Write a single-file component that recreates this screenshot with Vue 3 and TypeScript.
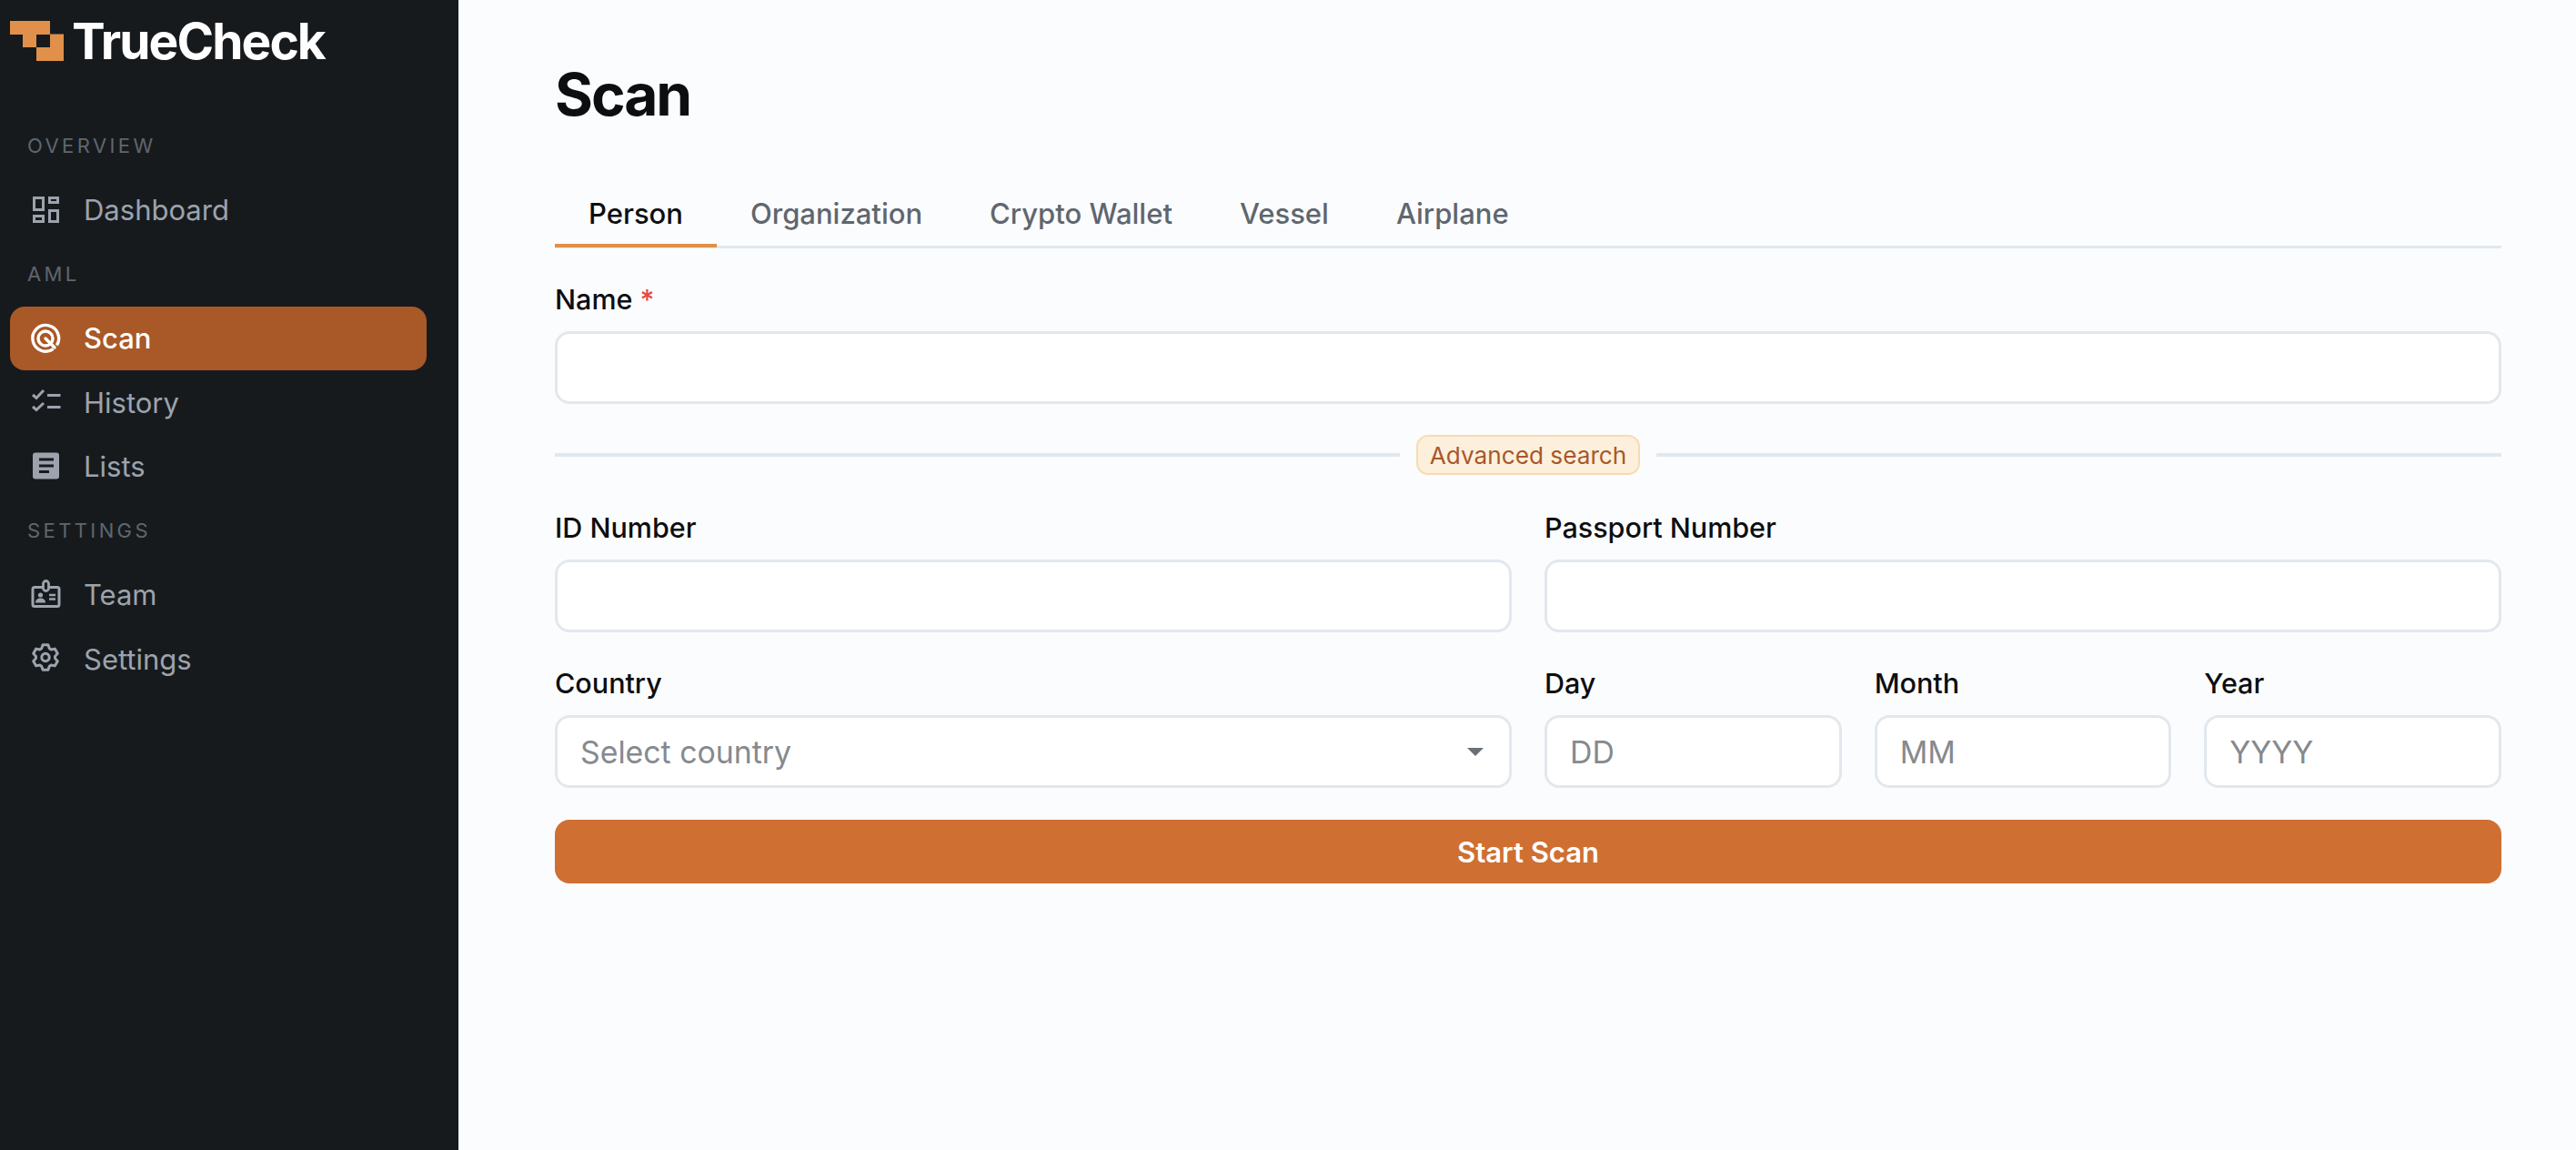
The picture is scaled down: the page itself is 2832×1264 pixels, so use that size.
<template>
  <div class="app">
    <aside class="sidebar">
      <div class="brand">
        <svg class="brand-mark" viewBox="0 0 60 44" width="60" height="44">
          <path d="M0 0H44V15H29V29H14V15H0Z" fill="#e0904a" />
          <path d="M44 14.500H59V44H29V29H44Z" fill="#e0904a" />
        </svg>
        <span class="brand-name">TrueCheck</span>
      </div>
      <nav class="nav">
        <template v-for="row in rows" :key="row.label">
          <div v-if="row.heading" class="nav-heading">{{ row.label }}</div>
          <a v-else class="nav-item" :class="{ active: row.active }">
            <svg class="nav-icon" viewBox="0 0 32 32" fill="none" stroke="currentColor" stroke-width="3" v-html="row.icon"></svg>
            <span>{{ row.label }}</span>
          </a>
        </template>
      </nav>
    </aside>

    <main class="main">
      <h1 class="title">Scan</h1>
      <div class="tabs">
        <button v-for="tab in tabs" :key="tab" class="tab" :class="{ active: tab === 'Person' }">{{ tab }}</button>
      </div>

      <div class="field name-field">
        <label>Name <span class="req">*</span></label>
        <div class="input"></div>
      </div>

      <div class="divider">
        <span class="divider-line"></span>
        <span class="badge">Advanced search</span>
        <span class="divider-line"></span>
      </div>

      <div class="two-col id-row">
        <div class="field">
          <label>ID Number</label>
          <div class="input"></div>
        </div>
        <div class="field">
          <label>Passport Number</label>
          <div class="input"></div>
        </div>
      </div>

      <div class="two-col country-row">
        <div class="field">
          <label>Country</label>
          <div class="input select">
            <span class="placeholder">Select country</span>
            <span class="caret"></span>
          </div>
        </div>
        <div class="date-row">
          <div v-for="d in dateFields" :key="d.label" class="field">
            <label>{{ d.label }}</label>
            <div class="input"><span class="placeholder">{{ d.hint }}</span></div>
          </div>
        </div>
      </div>

      <button class="start">Start Scan</button>
    </main>
  </div>
</template>

<script setup lang="ts">
interface Row {
  label: string
  heading?: boolean
  active?: boolean
  icon?: string
}

// six toothed gear, top tooth pointing straight up
function gearPoints(cx: number, cy: number): string {
  const pts: string[] = []
  for (let k = 0; k < 6; k++) {
    const a = -90 + 60 * k
    for (const [off, r] of [[-24, 10.6], [-12, 14], [12, 14], [24, 10.6]]) {
      const rad = ((a + off) * Math.PI) / 180
      pts.push(`${(cx + r * Math.cos(rad)).toFixed(2)},${(cy + r * Math.sin(rad)).toFixed(2)}`)
    }
  }
  return pts.join(' ')
}

const rows: Row[] = [
  { label: 'OVERVIEW', heading: true },
  {
    label: 'Dashboard',
    icon: '<path d="M3.500 2.500h10v13h-10zM3.500 22.500h10v6h-10zM20.500 2.500h9v5h-9zM20.500 16.500h9v12h-9z"/>'
  },
  { label: 'AML', heading: true },
  {
    label: 'Scan',
    active: true,
    icon: '<g stroke-width="3.400"><path d="M24.500 27.600A14.400 14.400 0 1 1 28.400 23.500"/><circle cx="16" cy="16" r="8"/><path d="M16 16l10 10" stroke-linecap="round"/></g>'
  },
  {
    label: 'History',
    icon: '<path d="M2 8l4 3.500 8-8.500M2 21l4 3.500 8-7.500"/><path d="M18 8.500h14.500M18 21.500h14.500"/>'
  },
  {
    label: 'Lists',
    icon: '<rect x="2" y="0.500" width="29" height="29" rx="3" fill="currentColor" stroke="none"/><path d="M9 8h16M9 15h16M9 21.500h11" stroke="#171a1d"/>'
  },
  { label: 'SETTINGS', heading: true },
  {
    label: 'Team',
    icon: '<path d="M13.500 7.500H4a2 2 0 0 0-2 2v17a2 2 0 0 0 2 2h25a2 2 0 0 0 2-2v-17a2 2 0 0 0-2-2H19.500"/><rect x="13.500" y="0.500" width="6" height="11" rx="3" stroke-width="2.800"/><circle cx="10.500" cy="16" r="2.600" fill="currentColor" stroke="none"/><path d="M5 24.500c0-3.500 2.500-5 5.500-5s5.500 1.500 5.500 5z" fill="currentColor" stroke="none"/><path d="M20 16h7M20 20.500h7" stroke-width="2.400"/>'
  },
  {
    label: 'Settings',
    icon: `<polygon points="${gearPoints(16, 14.5)}" stroke-linejoin="round"/><circle cx="16" cy="14.500" r="4.200"/>`
  }
]

const tabs = ['Person', 'Organization', 'Crypto Wallet', 'Vessel', 'Airplane']

const dateFields = [
  { label: 'Day', hint: 'DD' },
  { label: 'Month', hint: 'MM' },
  { label: 'Year', hint: 'YYYY' }
]
</script>

<style>
html,
body {
  margin: 0;
  background: #fbfcfe;
}
</style>

<style scoped>
.app {
  display: flex;
  height: 1264px;
  font-family: Inter, "Noto Sans", sans-serif;
  color: #0c0e10;
  overflow: hidden;
}

/* Sidebar */
.sidebar {
  width: 504px;
  flex: none;
  background: #171a1d;
  box-sizing: border-box;
  padding: 23px 35px 0 11px;
}

.brand {
  display: flex;
  align-items: center;
  gap: 8px;
  height: 44px;
}

.brand-mark {
  flex: none;
}

.brand-name {
  font-size: 55px;
  font-weight: 700;
  letter-spacing: -1.900px;
  line-height: 44px;
  color: #fff;
}

.nav {
  margin-top: 58px;
}

.nav-heading {
  height: 70.500px;
  line-height: 70.500px;
  padding-left: 19px;
  font-size: 22px;
  letter-spacing: 3.400px;
  color: #5f666e;
}

.nav-item {
  display: flex;
  align-items: center;
  height: 70.500px;
  padding-left: 23px;
  gap: 26px;
  border-radius: 16px;
  font-size: 31px;
  color: #9ca3ad;
}

.nav-item.active {
  background: #a95828;
  color: #fff;
  font-weight: 500;
}

.nav-icon {
  width: 32px;
  height: 32px;
  flex: none;
  overflow: visible;
}

/* Main */
.main {
  flex: 1;
  box-sizing: border-box;
  padding: 62px 82px 0 106px;
  background: #fbfcfe;
}

.title {
  margin: 0;
  font-size: 64px;
  font-weight: 700;
  letter-spacing: -2px;
  line-height: 84px;
}

.tabs {
  display: flex;
  margin-top: 40px;
  border-bottom: 3px solid #e1e8ee;
  height: 84px;
  box-sizing: content-box;
}

.tab {
  height: 86px;
  padding: 14px 37px 0;
  border: 0;
  border-bottom: 4px solid transparent;
  background: none;
  font: 500 31px Inter, sans-serif;
  color: #5f666e;
}

.tab.active {
  color: #0c0e10;
  border-bottom-color: #e0904a;
}

.field label {
  display: block;
  height: 35px;
  margin-bottom: 18px;
  font-size: 30.500px;
  font-weight: 500;
  line-height: 35px;
}

.req {
  color: #e8483f;
}

.name-field {
  margin-top: 38px;
}

.input {
  display: flex;
  align-items: center;
  box-sizing: border-box;
  height: 80px;
  padding: 0 25px;
  background: #fff;
  border: 3px solid #e1e8ee;
  border-radius: 16px;
}

.placeholder {
  font-size: 33.800px;
  color: #86898e;
}

.select {
  justify-content: space-between;
  padding-right: 28px;
}

.caret {
  width: 0;
  height: 0;
  border-left: 9px solid transparent;
  border-right: 9px solid transparent;
  border-top: 9px solid #6b7078;
}

.divider {
  display: flex;
  align-items: center;
  gap: 18px;
  margin-top: 34px;
}

.divider-line {
  flex: 1;
  height: 4px;
  background: #e1e8ee;
}

.badge {
  display: flex;
  align-items: center;
  box-sizing: border-box;
  height: 44px;
  padding: 0 13px;
  border: 2.500px solid #f5dcb0;
  border-radius: 13px;
  background: #fcf0dc;
  color: #a9572a;
  font-size: 26.200px;
  white-space: nowrap;
}

.two-col {
  display: grid;
  grid-template-columns: 1fr 1fr;
  gap: 36px;
}

.id-row {
  margin-top: 40px;
}

.country-row {
  margin-top: 38px;
}

.date-row {
  display: grid;
  grid-template-columns: repeat(3, 1fr);
  gap: 36px;
}

.start {
  display: block;
  width: 100%;
  height: 70px;
  margin-top: 35px;
  border: 0;
  border-radius: 16px;
  background: #cf6f32;
  color: #fff;
  font: 600 31px Inter, sans-serif;
}
</style>
